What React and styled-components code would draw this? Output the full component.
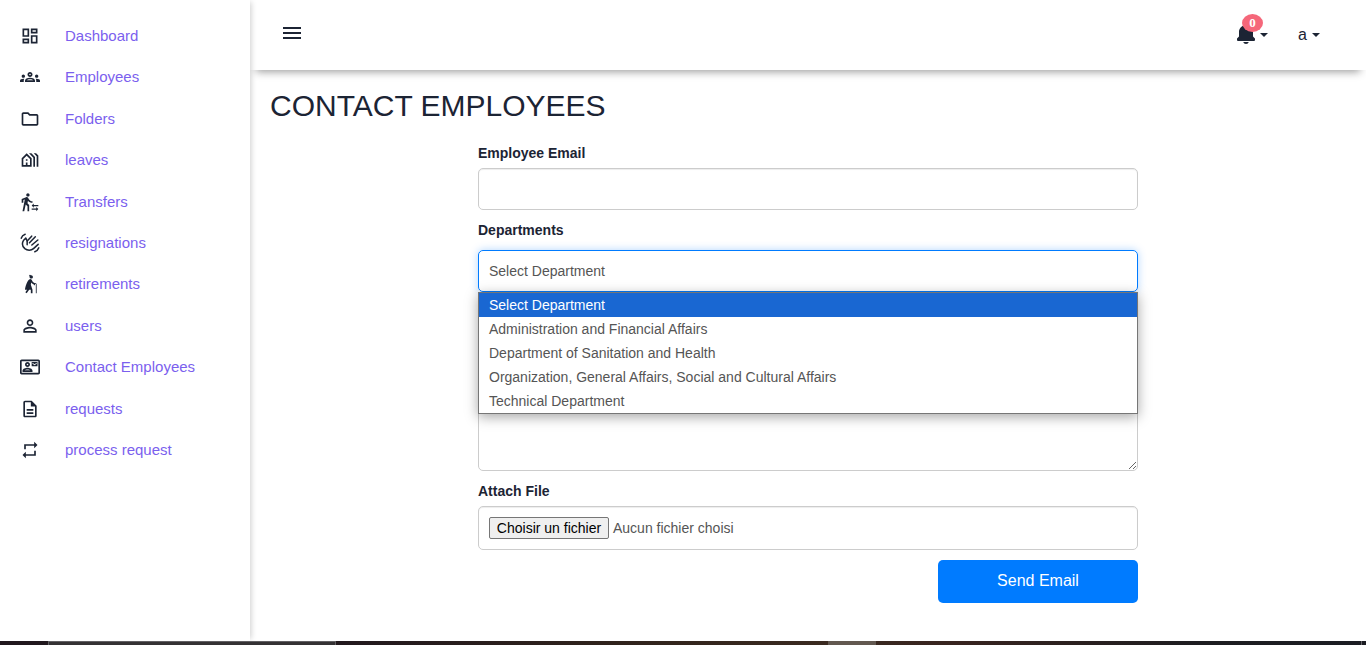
import React from 'react';
import styled, { createGlobalStyle } from 'styled-components';
import {
  MdOutlineDashboard,
  MdOutlineGroups,
  MdOutlineFolder,
  MdOutlineHolidayVillage,
  MdTransferWithinAStation,
  MdElderlyWoman,
  MdPersonOutline,
  MdOutlineContactMail,
  MdOutlineDescription,
  MdRepeat,
  MdMenu,
} from 'react-icons/md';
import { BiSolidBell } from 'react-icons/bi';

const GlobalStyle = createGlobalStyle`
  *, *::before, *::after { box-sizing: border-box; }
  body {
    margin: 0;
    overflow: hidden;
    background: #fff;
    color: #1c2434;
    font-family: "Liberation Sans", Arial, sans-serif;
  }
`;

const Screen = styled.div`
  height: 645px;
  display: flex;
  flex-direction: column;
`;

const Page = styled.div`
  flex: 1;
  min-height: 0;
  display: flex;
  overflow: hidden;
`;

const Sidebar = styled.nav`
  position: relative;
  z-index: 2;
  width: 250px;
  flex: none;
  padding-top: 14.9px;
  background: #fff;
  box-shadow: 3px 0 6px -2px rgba(0, 0, 0, 0.2);
`;

const NavItem = styled.a`
  display: flex;
  align-items: center;
  height: 41.4px;
  padding-left: 20px;
  gap: 25px;
  color: #7b5fee;
  font-size: 15px;
  text-decoration: none;

  svg {
    flex: none;
    margin-top: 0.8px;
    color: #1c2434;
  }
`;

const Main = styled.main`
  flex: 1;
  min-width: 0;
`;

const Header = styled.header`
  height: 70px;
  padding: 0 46px 4px 30px;
  display: flex;
  align-items: center;
  justify-content: space-between;
  background: #fff;
  box-shadow: 0 8px 8px -6px rgba(0, 0, 0, 0.38);
`;

const HeaderActions = styled.div`
  display: flex;
  align-items: center;
  gap: 30px;
  padding-top: 2px;
  font-size: 16px;
`;

const Toggle = styled.div`
  position: relative;
  display: flex;
  align-items: center;
  gap: ${(p) => p.$gap}px;
`;

const UserName = styled.span`
  padding-top: 2px;
`;

const Caret = styled.span`
  border: 4px solid transparent;
  border-top-color: #1c2434;
  border-bottom: 0;
  margin-top: 1px;
`;

const Badge = styled.span`
  position: absolute;
  left: 8px;
  top: -8px;
  width: 21px;
  height: 18px;
  border-radius: 50%;
  background: #f5677a;
  color: #fff;
  font: bold 13px/18px "Liberation Serif", serif;
  text-align: center;
`;

const Title = styled.h1`
  margin: 0;
  padding: 17px 20px 1px;
  font-size: 30px;
  font-weight: 400;
  line-height: 37px;
`;

const Form = styled.form`
  width: 660px;
  margin: 18px 0 0 228px;
  display: flex;
  flex-direction: column;
`;

const Field = styled.div`
  position: relative;
  display: flex;
  flex-direction: column;
  margin-bottom: 10px;
`;

const Label = styled.label`
  height: 20px;
  line-height: 20px;
  margin-bottom: ${(p) => p.$space ?? 5}px;
  font-size: 14px;
  font-weight: 700;
`;

const TextInput = styled.input`
  height: 42px;
  padding: 10px;
  border: 1px solid #ccc;
  border-radius: 5px;
  box-shadow: inset 0 1px 1px rgba(0, 0, 0, 0.075);
  outline: none;
`;

const SelectBox = styled.div`
  height: 42px;
  padding: 0 10px;
  border: 1px solid #007bff;
  border-radius: 5px;
  box-shadow: 0 0 8px rgba(0, 123, 255, 0.3);
  font-size: 14px;
  line-height: 40px;
  color: #555;
`;

const Options = styled.ul`
  position: absolute;
  z-index: 1;
  top: 100%;
  left: 0;
  right: 0;
  margin: 0;
  padding: 0;
  list-style: none;
  border: 1px solid #767676;
  background: #fff;
  box-shadow: 0 3px 12px rgba(0, 0, 0, 0.35);
`;

const Option = styled.li`
  height: 24px;
  padding: 0 10px;
  font-size: 14px;
  line-height: 24px;
  color: ${(p) => (p.$selected ? '#fff' : '#555')};
  background: ${(p) => (p.$selected ? '#1967d2' : '#fff')};
`;

const Message = styled.textarea`
  height: 144px;
  margin-top: 25px;
  padding: 10px;
  border: 1px solid #ccc;
  border-radius: 5px;
  resize: vertical;
  outline: none;
`;

const FileBox = styled.div`
  height: 44px;
  padding: 0 10px;
  display: flex;
  align-items: center;
  gap: 4px;
  border: 1px solid #ccc;
  border-radius: 5px;
  box-shadow: inset 0 1px 1px rgba(0, 0, 0, 0.075);
  font-size: 14px;
  color: #555;
`;

const FileButton = styled.button`
  height: 22px;
  width: 120px;
  padding: 0;
  border: 1px solid #767676;
  border-radius: 2px;
  background: #efefef;
  color: #000;
  font: 14px "Liberation Sans", Arial, sans-serif;
`;

const Submit = styled.button`
  align-self: flex-end;
  width: 200px;
  height: 43px;
  padding: 0 0 2px;
  border: 0;
  border-radius: 5px;
  background: #007bff;
  color: #fff;
  font: 16px "Liberation Sans", Arial, sans-serif;
`;

const Taskbar = styled.footer`
  height: 4px;
  flex: none;
  display: flex;
  background: linear-gradient(90deg, #21181d 0, #21181d 24%, #30231c 45%, #3a2a20 60%, #38241f 70%, #1d1d21 88%, #1b1c22 100%);
`;

const TaskbarSearch = styled.div`
  width: 288px;
  margin-left: 48px;
  border: 1px solid #626063;
  border-bottom: 0;
  background: #343234;
`;

const TaskbarActive = styled.div`
  width: 48px;
  margin-left: 492px;
  background: #625850;
`;

const TaskbarEdge = styled.div`
  width: 1px;
  margin: 0 4px 0 auto;
  background: #66666a;
`;

function WavingHand({ size }) {
  return (
    <svg
      width={size}
      height={size}
      viewBox="0 0 24 24"
      fill="none"
      stroke="currentColor"
      strokeWidth="1.8"
      strokeLinecap="round"
      strokeLinejoin="round"
    >
      <path d="M1.4 6.2Q2.6 2.8 6.2 1.6" />
      <path d="M22.6 17.8Q21.4 21.2 17.8 22.4" />
      <path d="M8.6 14V9.6L7 6L4.4 8.6C2.2 12 2.8 16 5.8 18.8C8.8 21.4 13.4 21.4 16.2 18.8L21.8 13.6" />
      <path d="M8.6 9.6L14 3.8M11.4 11.8L18.4 4.6M14.2 14.4L21.4 8.4" />
    </svg>
  );
}

const links = [
  ['Dashboard', MdOutlineDashboard],
  ['Employees', MdOutlineGroups],
  ['Folders', MdOutlineFolder],
  ['leaves', MdOutlineHolidayVillage],
  ['Transfers', MdTransferWithinAStation],
  ['resignations', WavingHand],
  ['retirements', MdElderlyWoman],
  ['users', MdPersonOutline],
  ['Contact Employees', MdOutlineContactMail],
  ['requests', MdOutlineDescription],
  ['process request', MdRepeat],
];

const departments = [
  'Select Department',
  'Administration and Financial Affairs',
  'Department of Sanitation and Health',
  'Organization, General Affairs, Social and Cultural Affairs',
  'Technical Department',
];

export default function App() {
  return (
    <Screen>
      <GlobalStyle />
      <Page>
        <Sidebar>
          {links.map(([name, Icon]) => (
            <NavItem key={name}>
              <Icon size={20} />
              <span>{name}</span>
            </NavItem>
          ))}
        </Sidebar>
        <Main>
          <Header>
            <MdMenu size={24} />
            <HeaderActions>
              <Toggle $gap={2}>
                <BiSolidBell size={24} />
                <Caret />
                <Badge>0</Badge>
              </Toggle>
              <Toggle $gap={5}>
                <UserName>a</UserName>
                <Caret />
              </Toggle>
            </HeaderActions>
          </Header>
          <Title>CONTACT EMPLOYEES</Title>
          <Form>
            <Field>
              <Label>Employee Email</Label>
              <TextInput />
            </Field>
            <Field>
              <Label $space={10}>Departments</Label>
              <SelectBox>Select Department</SelectBox>
              <Options>
                {departments.map((name, i) => (
                  <Option key={name} $selected={i === 0}>{name}</Option>
                ))}
              </Options>
            </Field>
            <Field>
              <Message />
            </Field>
            <Field>
              <Label>Attach File</Label>
              <FileBox>
                <FileButton type="button">Choisir un fichier</FileButton>
                Aucun fichier choisi
              </FileBox>
            </Field>
            <Submit type="button">Send Email</Submit>
          </Form>
        </Main>
      </Page>
      <Taskbar>
        <TaskbarSearch />
        <TaskbarActive />
        <TaskbarEdge />
      </Taskbar>
    </Screen>
  );
}
